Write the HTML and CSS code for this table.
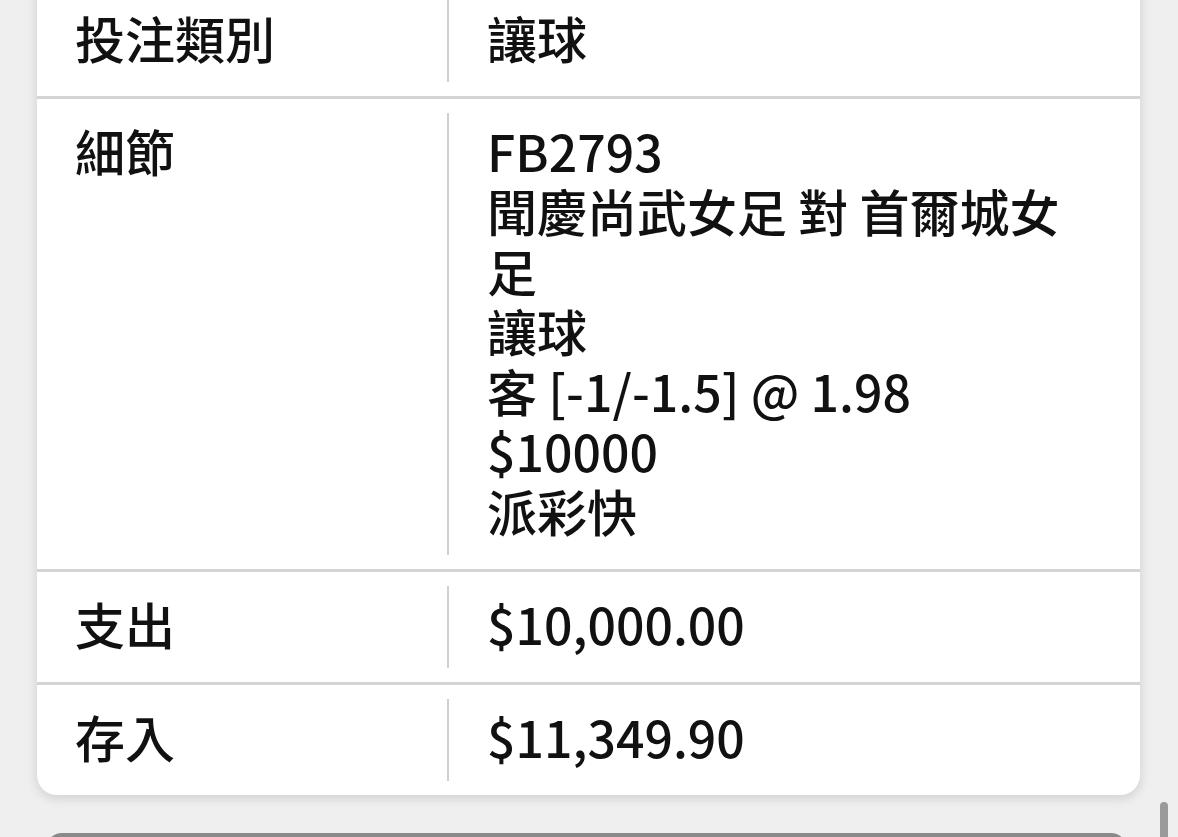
FILE: index.html
```html
<!DOCTYPE html>
<html lang="zh-Hant">
<head>
<meta charset="utf-8">
<title>投注詳情</title>
<link rel="stylesheet" href="styles.css">
</head>
<body>
<div class="page">
  <div class="card">
    <div class="row">
      <div class="label">投注類別</div>
      <div class="value">讓球</div>
    </div>
    <div class="row">
      <div class="label">細節</div>
      <div class="value">FB2793<br>聞慶尚武女足 對 首爾城女足<br>讓球<br>客 [-1/-1.5] @ 1.98<br>$10000<br>派彩快</div>
    </div>
    <div class="row">
      <div class="label">支出</div>
      <div class="value">$10,000.00</div>
    </div>
    <div class="row">
      <div class="label">存入</div>
      <div class="value">$11,349.90</div>
    </div>
  </div>
  <div class="next-card"></div>
</div>
<div class="scrollbar"></div>
</body>
</html>
```
FILE: styles.css
```css
html, body {
  margin: 0;
  padding: 0;
  height: 100%;
  overflow: hidden;
  background: #efefef;
}
body {
  font-family: "Noto Sans CJK TC", "Noto Sans CJK SC", sans-serif;
  color: #111;
}
.page {
  display: flex;
  flex-direction: column;
  gap: 38px;
  padding: 0 38px 0 37px;
  margin-top: -14px;
}
.card {
  background: #fff;
  border-radius: 0 0 20px 20px;
  box-shadow: 0 3px 12px rgba(0, 0, 0, 0.14);
}
.row {
  display: grid;
  grid-template-columns: 412px 1fr;
  padding: 14px 0;
  border-bottom: 3px solid #d4d4d4;
}
.row:last-child {
  border-bottom: none;
}
.label, .value {
  font-size: 50px;
  font-weight: 500;
  line-height: 60px;
  padding: 7px 40px 15px 38px;
}
.label {
  border-right: 2px solid #d0d0d0;
}
.next-card {
  height: 40px;
  margin: 0 13px 0 9px;
  background: #8a8a8a;
  border-radius: 16px 16px 0 0;
}
.scrollbar {
  position: absolute;
  left: 1160px;
  top: 802px;
  width: 8px;
  height: 60px;
  border-radius: 4px;
  background: #9a9a9a;
}
```
